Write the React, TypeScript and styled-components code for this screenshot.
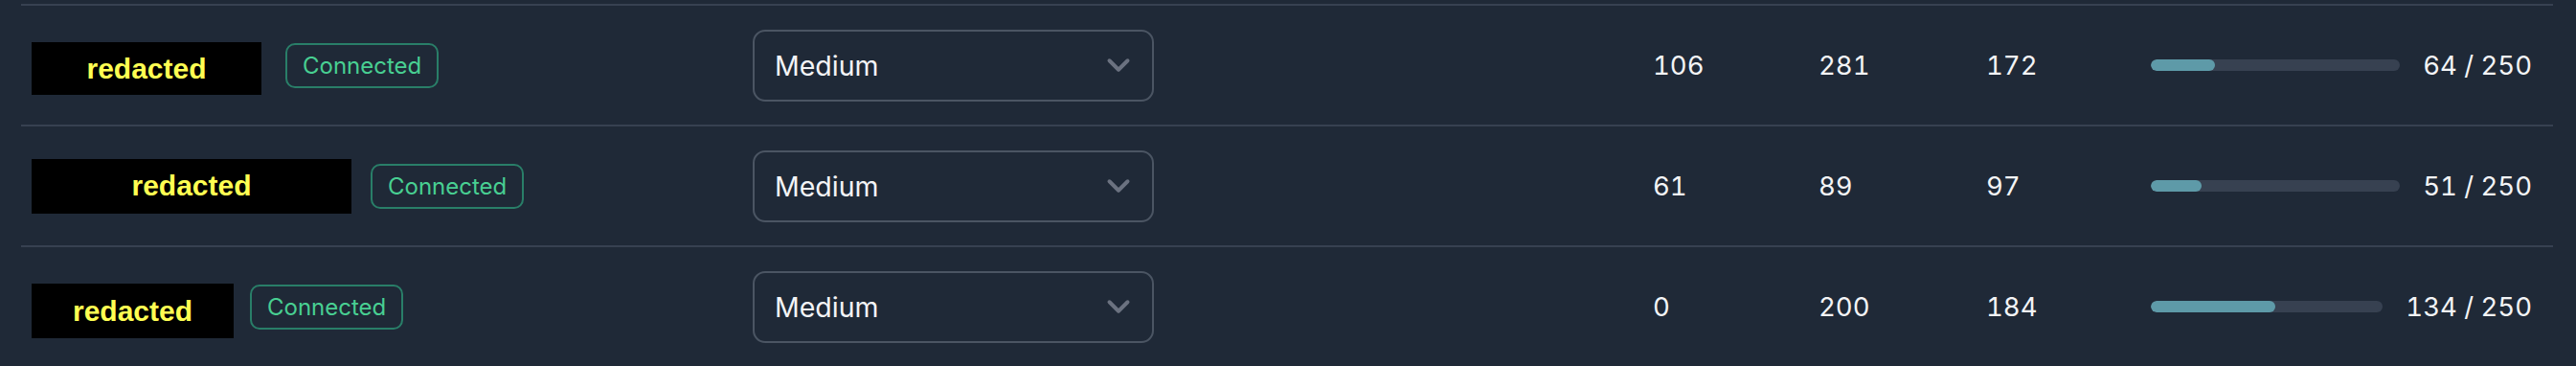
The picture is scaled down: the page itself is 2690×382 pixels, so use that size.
import React from "react";
import styled, { createGlobalStyle } from "styled-components";

const GlobalStyle = createGlobalStyle`
  html, body {
    margin: 0;
    padding: 0;
    background: #1f2937;
  }
  body {
    font-family: Inter, "Noto Sans", "Liberation Sans", sans-serif;
    color: #f3f4f6;
  }
  * { box-sizing: border-box; }
`;

const Table = styled.div`
  display: flex;
  flex-direction: column;
  padding: 4px 24px 0 22px;
  background: #1f2937;
  height: 382px;
  overflow: hidden;
`;

const Row = styled.div`
  display: grid;
  grid-template-columns: 742px 940px 173px 175px 172px 1fr;
  align-items: center;
  height: 126px;
  flex-shrink: 0;
  border-top: 2px solid #374151;
`;

const Cell = styled.div`
  display: flex;
  align-items: center;
  height: 100%;
  padding: 0 22px;
  min-width: 0;
`;

const NameCell = styled(Cell)`
  padding-left: 11px;
`;

const Redacted = styled.span<{ $w: number; $h: number; $shift: number; $gap: number }>`
  display: inline-flex;
  align-items: center;
  justify-content: center;
  flex-shrink: 0;
  width: ${(p) => p.$w}px;
  height: ${(p) => p.$h}px;
  margin-top: ${(p) => p.$shift}px;
  margin-right: ${(p) => p.$gap}px;
  background: #000;
  color: #ffff52;
  font-family: "Liberation Sans", Arial, sans-serif;
  font-weight: 700;
  font-size: 30px;
  line-height: 1;
`;

const Badge = styled.span`
  display: inline-flex;
  align-items: center;
  height: 47px;
  padding: 0 16px;
  border: 2px solid rgba(52, 211, 153, 0.5);
  border-radius: 10px;
  color: #48cf92;
  font-size: 24px;
  font-weight: 400;
  white-space: nowrap;
`;

const Select = styled.div`
  display: flex;
  align-items: center;
  justify-content: space-between;
  width: 419px;
  height: 75px;
  padding: 0 16px 0 21px;
  border: 2px solid #4b5563;
  border-radius: 13px;
  color: #f3f4f6;
  font-size: 28.5px;
  font-weight: 400;
`;

const Chevron = styled.svg`
  width: 38px;
  height: 38px;
  color: #6b7280;
  flex-shrink: 0;
`;

const Num = styled(Cell)`
  font-size: 27.5px;
  font-variant-numeric: tabular-nums;
  color: #f3f4f6;
`;

const ProgressCell = styled(Cell)`
  gap: 24px;
`;

const Track = styled.div`
  flex: 1;
  height: 12px;
  border-radius: 6px;
  background: #374151;
  overflow: hidden;
`;

const Fill = styled.div`
  height: 100%;
  border-radius: 6px;
  background: #5e9aa8;
`;

const Label = styled.span`
  font-size: 27.5px;
  font-variant-numeric: tabular-nums;
  white-space: nowrap;
  color: #f3f4f6;
`;

type RowData = {
  w: number;
  h: number;
  shift: number;
  gap: number;
  a: number;
  b: number;
  c: number;
  used: number;
  total: number;
};

const rows: RowData[] = [
  { w: 240, h: 55, shift: 7, gap: 25, a: 106, b: 281, c: 172, used: 64, total: 250 },
  { w: 334, h: 57, shift: 0, gap: 20, a: 61, b: 89, c: 97, used: 51, total: 250 },
  { w: 211, h: 57, shift: 9, gap: 17, a: 0, b: 200, c: 184, used: 134, total: 250 },
];

const ChevronDown = () => (
  <Chevron viewBox="0 0 24 24" fill="none" stroke="currentColor" strokeWidth={2.5} strokeLinecap="round" strokeLinejoin="round">
    <path d="m6 9 6 6 6-6" />
  </Chevron>
);

export default function App() {
  return (
    <>
      <GlobalStyle />
      <Table>
        {rows.map((r, i) => (
          <Row key={i}>
            <NameCell>
              <Redacted $w={r.w} $h={r.h} $shift={r.shift} $gap={r.gap}>redacted</Redacted>
              <Badge>Connected</Badge>
            </NameCell>
            <Cell>
              <Select>
                <span>Medium</span>
                <ChevronDown />
              </Select>
            </Cell>
            <Num>{r.a}</Num>
            <Num>{r.b}</Num>
            <Num>{r.c}</Num>
            <ProgressCell>
              <Track>
                <Fill style={{ width: `${(r.used / r.total) * 100}%` }} />
              </Track>
              <Label>
                {r.used} / {r.total}
              </Label>
            </ProgressCell>
          </Row>
        ))}
      </Table>
    </>
  );
}
